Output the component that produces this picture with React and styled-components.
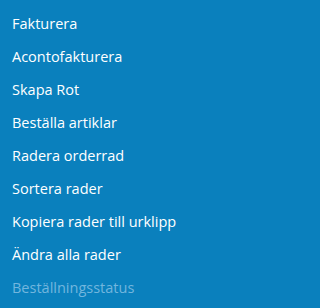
import React from "react";
import styled, { createGlobalStyle } from "styled-components";

const GlobalStyle = createGlobalStyle`
  html, body {
    margin: 0;
    padding: 0;
    background: #0a80bd;
  }
`;

const Menu = styled.ul`
  list-style: none;
  margin: 0;
  padding: 7px 0 0;
  width: 220px;
  height: 308px;
  box-sizing: border-box;
  background: #0a80bd;
  font-family: "Open Sans", "Noto Sans", sans-serif;
`;

const Item = styled.li`
  height: 33px;
  line-height: 33px;
  padding: 0 12px;
  font-size: 14.5px;
  color: ${(p) => (p.disabled ? "#72b6de" : "#ffffff")};
  white-space: nowrap;
  cursor: ${(p) => (p.disabled ? "default" : "pointer")};
`;

const items = [
  "Fakturera",
  "Acontofakturera",
  "Skapa Rot",
  "Beställa artiklar",
  "Radera orderrad",
  "Sortera rader",
  "Kopiera rader till urklipp",
  "Ändra alla rader",
];

export default function App() {
  return (
    <>
      <GlobalStyle />
      <Menu>
        {items.map((label) => (
          <Item key={label}>{label}</Item>
        ))}
        <Item disabled>Beställningsstatus</Item>
      </Menu>
    </>
  );
}
